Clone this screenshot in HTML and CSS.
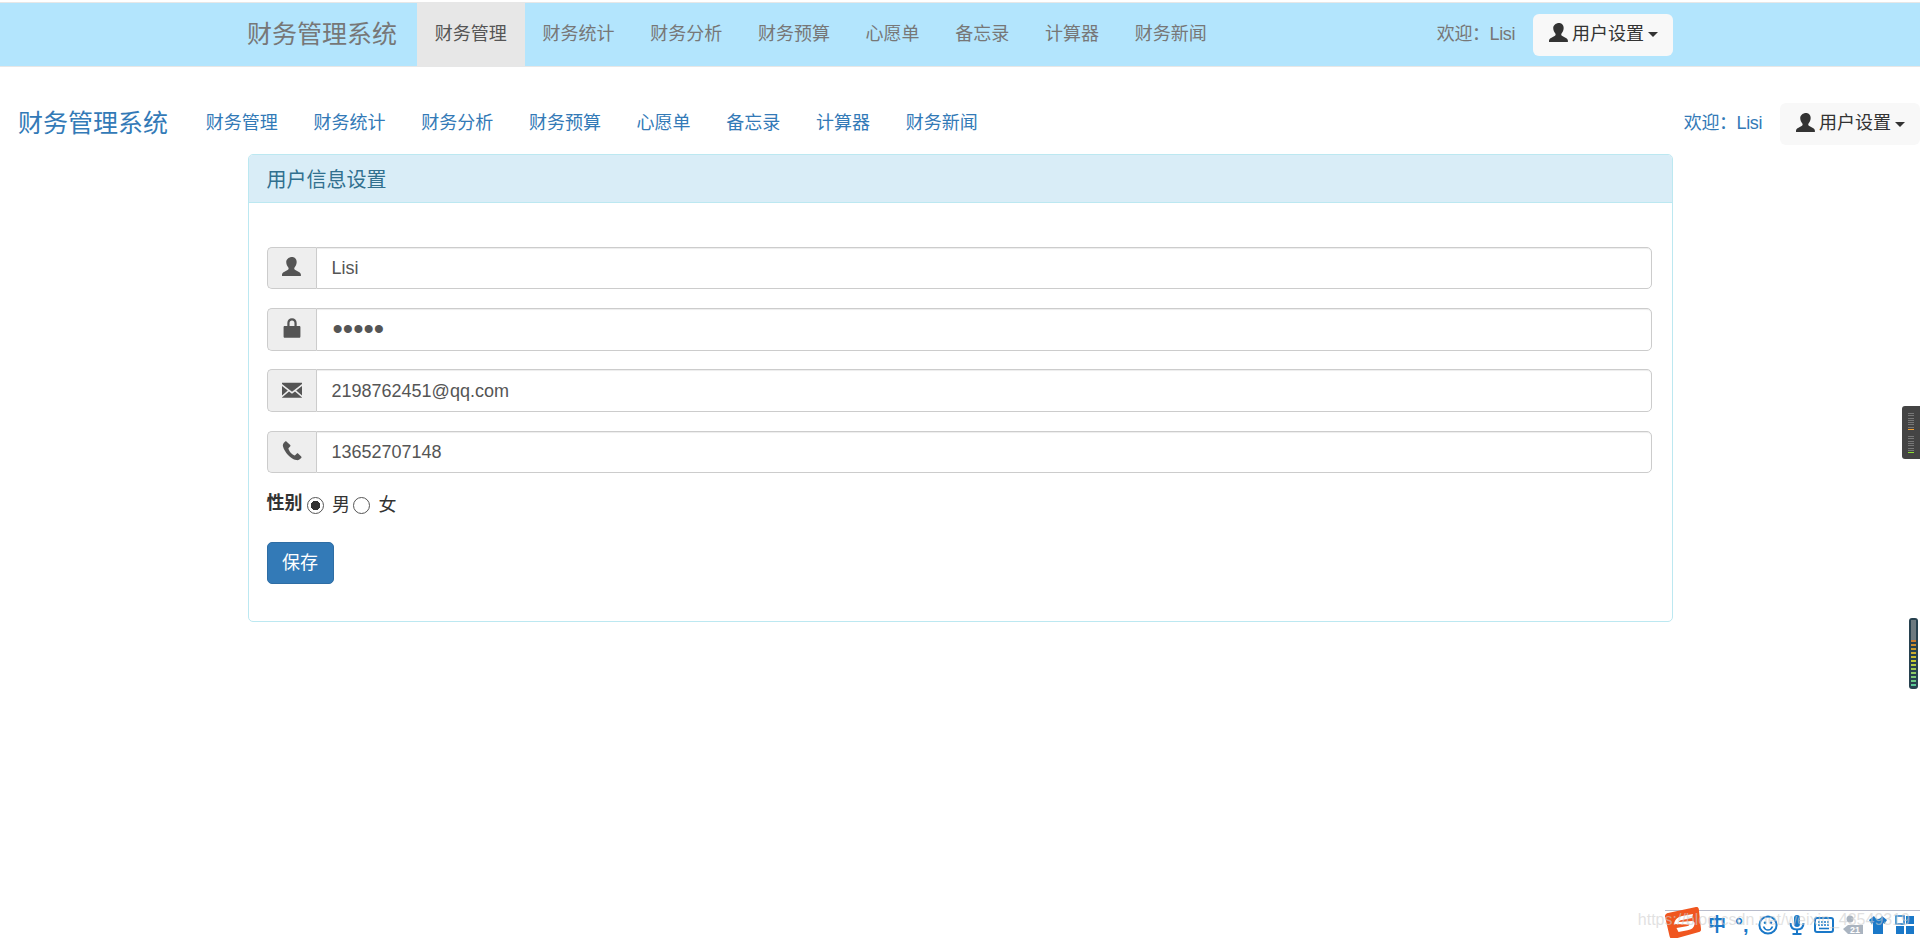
FILE: index.html
```html
<!DOCTYPE html>
<html lang="zh-CN">
<head>
<meta charset="utf-8">
<title>财务管理系统</title>
<link rel="stylesheet" href="styles.css">
</head>
<body>
<header class="navbar">
  <div class="nav-inner nav-inner-center">
    <a class="brand">财务管理系统</a>
    <ul class="nav-list">
      <li class="active"><a>财务管理</a></li>
      <li><a>财务统计</a></li>
      <li><a>财务分析</a></li>
      <li><a>财务预算</a></li>
      <li><a>心愿单</a></li>
      <li><a>备忘录</a></li>
      <li><a>计算器</a></li>
      <li><a>财务新闻</a></li>
    </ul>
    <div class="nav-right">
      <span class="welcome">欢迎：Lisi</span>
      <button class="user-btn">
        <svg class="glyph" viewBox="0 0 18 18"><path d="M9 0c2.600 0 4.200 1.900 4.200 4.600 0 1.900-.8 3.700-1.900 4.900-.4.5-.4 1.500.3 1.900l3.600 2c1.200.7 1.800 1.500 1.800 2.600V17H0v-1c0-1.100.6-1.900 1.800-2.600l3.600-2c.7-.4.7-1.400.3-1.900C4.600 8.300 3.800 6.500 3.800 4.600 3.800 1.900 6.400 0 9 0z"/></svg>
        <span>用户设置</span><i class="caret"></i>
      </button>
    </div>
  </div>
</header>
<nav class="navbar-plain">
  <div class="nav-inner">
    <a class="brand">财务管理系统</a>
    <ul class="nav-list">
      <li><a>财务管理</a></li>
      <li><a>财务统计</a></li>
      <li><a>财务分析</a></li>
      <li><a>财务预算</a></li>
      <li><a>心愿单</a></li>
      <li><a>备忘录</a></li>
      <li><a>计算器</a></li>
      <li><a>财务新闻</a></li>
    </ul>
    <div class="nav-right">
      <span class="welcome">欢迎：Lisi</span>
      <button class="user-btn">
        <svg class="glyph" viewBox="0 0 18 18"><path d="M9 0c2.600 0 4.200 1.900 4.200 4.600 0 1.900-.8 3.700-1.900 4.900-.4.5-.4 1.500.3 1.900l3.600 2c1.200.7 1.800 1.500 1.800 2.600V17H0v-1c0-1.100.6-1.900 1.800-2.600l3.600-2c.7-.4.7-1.400.3-1.900C4.600 8.300 3.800 6.500 3.800 4.600 3.800 1.900 6.400 0 9 0z"/></svg>
        <span>用户设置</span><i class="caret"></i>
      </button>
    </div>
  </div>
</nav>
<main class="panel">
  <div class="panel-heading">用户信息设置</div>
  <form class="panel-body">
    <div class="input-group">
      <span class="addon"><svg class="glyph" viewBox="0 0 18 18"><path d="M9 0c2.600 0 4.200 1.900 4.200 4.600 0 1.900-.8 3.700-1.900 4.900-.4.5-.4 1.500.3 1.900l3.600 2c1.200.7 1.800 1.500 1.800 2.600V17H0v-1c0-1.100.6-1.900 1.800-2.600l3.600-2c.7-.4.7-1.400.3-1.900C4.600 8.300 3.800 6.500 3.800 4.600 3.800 1.900 6.400 0 9 0z"/></svg></span>
      <input class="field" type="text" value="Lisi">
    </div>
    <div class="input-group">
      <span class="addon"><svg class="glyph" viewBox="1.800 .2 14.400 17.100"><path d="M5 7V4.500C5 1.800 6.700.4 9 .4s4 1.400 4 4.100V7h2.200c.6 0 1 .4 1 1v8c0 .7-.4 1.100-1 1.100H2.800c-.6 0-1-.4-1-1.100V8c0-.6.4-1 1-1H5zm1.900 0h4.200V4.600c0-1.500-.8-2.300-2.100-2.300s-2.100.8-2.100 2.300V7z"/></svg></span>
      <input class="field field-password" type="password" value="lisi1">
    </div>
    <div class="input-group">
      <span class="addon"><svg class="glyph" viewBox="0 0 18 18"><path d="M0 2.500h18v1.200L9 10.600 0 3.700V2.500zM0 5.400l5.200 4L0 14V5.400zm18 0V14l-5.200-4.600 5.200-4zM6.300 10.300 9 12.400l2.700-2.100 6.300 5.400V16H0v-.3l6.300-5.400z"/></svg></span>
      <input class="field" type="text" value="2198762451@qq.com">
    </div>
    <div class="input-group">
      <span class="addon"><svg class="glyph" viewBox="0 0 18 18"><path d="M4.200.6C3.700.2 3.200.2 2.700.6 1.200 1.900.4 3.100.9 5c.7 2.700 2.400 5.300 4.500 7.500 2.200 2.200 4.700 4 7.400 4.700 1.800.5 3.200-.4 4.500-1.800.4-.5.4-1 0-1.500l-2.600-2.500c-.5-.4-1-.4-1.500 0l-1.400 1.400c-.3.3-.6.3-1 .1-1-.6-2-1.400-3-2.400S6.500 8.400 5.900 7.400c-.2-.4-.2-.7.1-1l1.300-1.400c.5-.5.5-1 .1-1.500L4.200.6z"/></svg></span>
      <input class="field" type="text" value="13652707148">
    </div>
    <div class="gender-row">
      <strong class="gender-label">性别</strong>
      <label class="radio-item"><input class="radio" type="radio" name="sex" checked><span>男</span></label>
      <label class="radio-item"><input class="radio" type="radio" name="sex"><span>女</span></label>
    </div>
    <button class="save-btn" type="button">保存</button>
  </form>
</main>

<div class="meter-dock" aria-hidden="true">
  <div class="meter-group">
    <i></i><i></i><i></i><i></i><i></i><i></i><i></i><i class="m-orange"></i>
  </div>
  <div class="meter-group">
    <i></i><i></i><i></i><i></i><i></i><i></i><i></i><i class="m-green"></i>
  </div>
</div>
<div class="level-bar" aria-hidden="true"><div class="level-fill"></div></div>

<div class="ime-bar">
  <svg class="ime-logo" viewBox="0 0 36 32"><path d="M3 6 31 0c1.500-.3 2.500.5 2.800 2L36 22c.2 1.500-.5 2.500-2 3L9 32c-2.500.5-4-.5-4.500-3L0 9.500C-.3 7.800 1.500 6.300 3 6z" fill="#f0561f"/><path d="M9 17c1-5 4-7 8-8l11-2-1 4-10 2c-2 .4-3 1-3 2l13-1c2 0 3 1.500 2.500 3.500-.7 3.500-3 5-7 5.800l-9 1.700-2-4 10-1.700c1.500-.3 2.500-.8 3-1.800L9 17z" fill="#fff"/></svg>
  <span class="ime-text">中</span>
  <span class="ime-text ime-punct">°,</span>
  <svg class="ime-icon ime-smile" viewBox="0 0 20 20"><circle cx="10" cy="10" r="8.600" fill="none" stroke="#1a78c8" stroke-width="2"/><circle cx="7" cy="7.800" r="1.300" fill="#1a78c8"/><circle cx="13" cy="7.800" r="1.300" fill="#1a78c8"/><path d="M5.500 11.500c1 2.500 2.500 3.500 4.500 3.500s3.500-1 4.500-3.500" fill="none" stroke="#1a78c8" stroke-width="1.600"/></svg>
  <svg class="ime-icon" viewBox="0 0 20 20"><rect x="7" y="0" width="6" height="12" rx="3" fill="#1a78c8"/><path d="M3.500 8c0 4 2.500 6.500 6.500 6.500S16.500 12 16.500 8M10 14.500V18M5.500 19h9" fill="none" stroke="#1a78c8" stroke-width="2"/></svg>
  <svg class="ime-icon" viewBox="0 0 20 20"><rect x="1" y="3" width="18" height="14" rx="2" fill="none" stroke="#1a78c8" stroke-width="2"/><path d="M4 7h12M4 10h12" stroke="#1a78c8" stroke-width="1.600" stroke-dasharray="2 1"/><path d="M5 13.500h10" stroke="#1a78c8" stroke-width="1.600"/></svg>
  <svg class="ime-icon ime-wide" viewBox="0 0 22 20"><circle cx="9" cy="4" r="3.500" fill="#aab4c0"/><path d="M2 14l5-4h15v9H7z" fill="#aab4c0"/><text class="ime-badge" x="9" y="18">21</text></svg>
  <svg class="ime-icon ime-shirt" viewBox="0 0 20 20"><path d="M6 1 1 5l2.500 4L5 8v11h10V8l1.500 1L19 5l-5-4c-1 2-2.500 3-4 3S7 3 6 1z" fill="#1a78c8"/></svg>
  <svg class="ime-icon" viewBox="0 0 20 20"><rect x="1" y="11" width="8" height="8" fill="#1a78c8"/><rect x="11" y="11" width="8" height="8" fill="#1a78c8"/><rect x="1" y="1" width="8" height="8" fill="none" stroke="#1a78c8" stroke-width="1.500"/><rect x="11" y="1" width="8" height="8" fill="#1a78c8"/></svg>
</div>
<div class="watermark">https://blog.csdn.net/weixin_43549319</div>
</body>
</html>
```

FILE: styles.css
```css
* { box-sizing: border-box; }
html, body { height: 100%; }
body {
  margin: 0;
  padding-top: 2px;
  position: relative;
  overflow: hidden;
  background: #fff;
  color: #333;
  font-family: "Liberation Sans", "Noto Sans CJK SC", sans-serif;
  font-size: 18px;
  line-height: 1.43;
}
ul { list-style: none; margin: 0; padding: 0; }

.navbar {
  height: 65px;
  background: #b3e5fd;
  border-top: 1px solid #e7e7e7;
  border-bottom: 1px solid #e7e7e7;
  color: #777;
}
.navbar-plain {
  height: 64px;
  margin-top: 25px;
  color: #337ab7;
}
.nav-inner {
  display: flex;
  align-items: stretch;
  height: 100%;
}
.nav-inner-center {
  width: 1462px;
  margin: 0 auto;
  padding-right: 18px;
}
.brand {
  display: flex;
  align-items: center;
  padding: 0 20px 0 18px;
  font-size: 25px;
}
.nav-list { display: flex; }
.nav-list a {
  display: flex;
  align-items: center;
  height: 100%;
  padding: 0 17.850px;
}
.nav-list .active { background: #e7e7e7; color: #555; }
.nav-right {
  display: flex;
  align-items: center;
  gap: 18px;
  margin-left: auto;
}
.welcome { letter-spacing: -.4px; }
.user-btn {
  display: flex;
  align-items: center;
  width: 140px;
  height: 42px;
  padding: 0 0 0 16px;
  border: 0;
  border-radius: 6px;
  background: #f8f8f8;
  color: #333;
  font: inherit;
}
.user-btn .glyph { width: 20px; height: 20px; margin: -3px 3px 0 0; flex: none; fill: #333; }
.caret {
  width: 0;
  height: 0;
  margin-left: 4px;
  border-top: 5px solid #333;
  border-left: 5px solid transparent;
  border-right: 5px solid transparent;
}

.panel {
  width: 1425px;
  margin: -2px 0 0 247.500px;
  border: 1px solid #bce8f1;
  border-radius: 5px;
  overflow: hidden;
}
.panel-heading {
  display: flex;
  align-items: center;
  height: 48px;
  padding: 3px 18px 0;
  background: #d9edf7;
  border-bottom: 1px solid #bce8f1;
  color: #31708f;
  font-size: 20px;
}
.panel-body {
  padding: 44px 20px 37px 18px;
}
.input-group {
  display: flex;
  height: 42.400px;
  margin-bottom: 18.800px;
}
.addon {
  display: flex;
  align-items: center;
  justify-content: center;
  flex: none;
  width: 49px;
  background: #eee;
  border: 1px solid #ccc;
  border-right: 0;
  border-radius: 5px 0 0 5px;
}
.addon .glyph { width: 20px; height: 20px; margin-top: -2px; fill: #555; }
.field {
  flex: 1;
  min-width: 0;
  padding: 2px 15px 0;
  border: 1px solid #ccc;
  border-radius: 0 5px 5px 0;
  box-shadow: inset 0 1px 1px rgba(0, 0, 0, .075);
  color: #555;
  font: inherit;
  outline: 0;
}
.field-password { font-size: 29.500px; padding: 0 16px; }
.gender-row {
  display: flex;
  align-items: center;
  height: 25px;
  margin: 1.800px 0 25px;
}
.gender-label { margin-right: 4px; font-weight: 700; }
.radio-item { display: flex; align-items: center; }
.radio {
  appearance: none;
  width: 17px;
  height: 17px;
  margin: 2px 8.500px 0 0;
  border: 1.500px solid #555;
  border-radius: 50%;
  background: #fff;
}
.radio:checked { background: radial-gradient(circle, #333 0 4.500px, #fff 5px); }
.radio-item span { margin-right: 3px; padding-top: 3px; }
.save-btn {
  display: block;
  width: 67px;
  height: 42px;
  padding: 2px 0 0;
  border: 1px solid #2e6da4;
  border-radius: 5px;
  background: #337ab7;
  color: #fff;
  font: inherit;
}

/* desktop widgets and input-method bar that lie over the page */
.meter-dock {
  position: absolute;
  top: 406px;
  right: 0;
  display: flex;
  flex-direction: column;
  gap: 6px;
  width: 18px;
  height: 53px;
  padding: 7px 6px 0 6px;
  background: #444;
  border-radius: 3px 0 0 3px;
}
.meter-group { display: flex; flex-direction: column; gap: 1.300px; }
.meter-group i { display: block; height: 1px; background: #777; }
.meter-group .m-orange { background: #f5a030; }
.meter-group .m-green { background: #8ce030; }
.level-bar {
  position: absolute;
  top: 618px;
  right: 2px;
  width: 9px;
  height: 71px;
  padding: 2px;
  background: #27414f;
  border-radius: 3px;
}
.level-fill {
  height: 100%;
  background:
    linear-gradient(to bottom, #6d7a80 0 30%, transparent 30%),
    repeating-linear-gradient(to bottom, transparent 0 2px, #27414f 2px 4px),
    linear-gradient(to bottom, #c87a30 30%, #c8c830 60%, #50c8a0 100%);
}
.watermark {
  position: absolute;
  right: 10px;
  bottom: 8px;
  color: rgba(205, 205, 205, .6);
  font-family: "Liberation Sans", sans-serif;
  font-size: 16px;
  line-height: 20px;
}
.ime-bar {
  position: absolute;
  right: 0;
  bottom: 0;
  display: flex;
  align-items: center;
  gap: 7px;
  width: 255px;
  height: 28px;
  border-top: 1px solid #b8bccb;
}
.ime-logo { width: 36px; height: 32px; margin-top: -3px; flex: none; }
.ime-text { color: #1a78c8; font-size: 18px; font-weight: 700; line-height: 1; }
.ime-punct { margin: 0 2px; font-size: 20px; }
.ime-icon { width: 20px; height: 20px; flex: none; }
.ime-smile { margin-right: 2px; }
.ime-wide { width: 22px; }
.ime-shirt { margin-left: -2px; }
.ime-badge { fill: #fff; font-size: 9px; font-weight: 700; font-family: "Liberation Sans", sans-serif; }
```
